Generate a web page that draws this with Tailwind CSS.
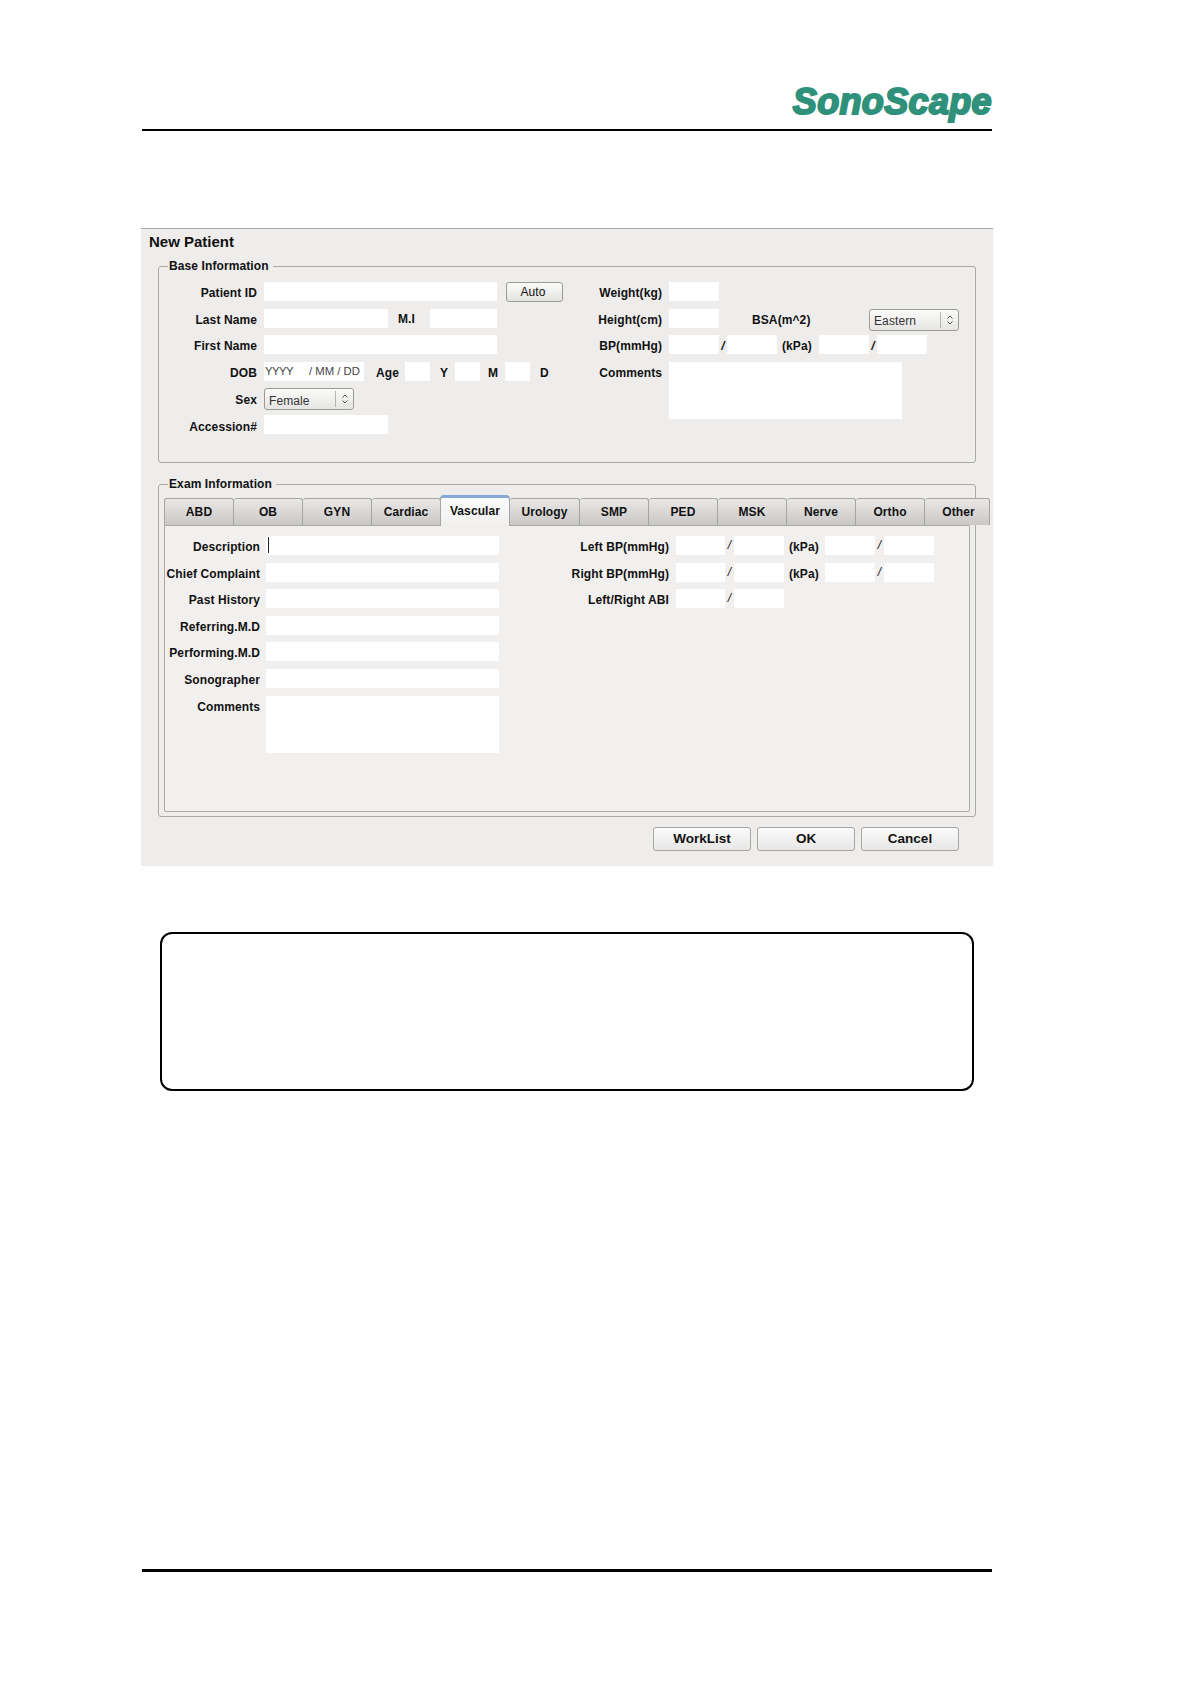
<!DOCTYPE html>
<html lang="en">
<head>
    <meta charset="UTF-8">
    <title>New Patient</title>
    <script src="https://cdn.jsdelivr.net/npm/@tailwindcss/browser@4"></script>
</head>
<body class="bg-white font-['Liberation_Sans',Arial,sans-serif] text-[12px] tracking-[0.1px] text-[#111]">
<div class="w-[1191px] h-[1684px] flex flex-col">

    <!-- page header -->
    <header class="ml-[142px] w-[850px] h-[131px] flex items-end justify-end border-b-2 border-black shrink-0">
        <span class="text-[36px] leading-[36px] mb-[9px] font-bold italic tracking-[0.35px] text-[#2f917a] [-webkit-text-stroke:2px_#2f917a]">SonoScape</span>
    </header>

    <!-- dialog -->
    <section class="ml-[141px] mt-[97px] w-[852px] h-[638px] shrink-0 bg-[#eeedec] border-t border-[#aaaaa8]">
        <h2 class="ml-[8px] mt-[3px] text-[15px] leading-[20px] font-bold tracking-normal">New Patient</h2>

        <!-- base information -->
        <div class="relative ml-[17px] mt-[14px] w-[818px] h-[197px] border border-[#a9a9a7] rounded-[3px] flex pt-[15px]">
            <span class="absolute left-[9px] top-[-9px] leading-[16px] font-bold bg-[#eeedec] pl-px pr-[4px]">Base Information</span>

            <div class="w-[416px] flex flex-col gap-[7.6px]">
                <div class="flex h-[19px]">
                    <label class="w-[98px] text-right font-bold leading-[22px]">Patient ID</label>
                    <div class="ml-[7px] w-[233px] bg-white"></div>
                    <button class="ml-[9px] w-[57px] h-[20px] pr-[3px] border border-[#9b9b99] rounded-[3px] bg-gradient-to-b from-[#fbfbfa] to-[#e4e3e2] leading-[16px]">Auto</button>
                </div>
                <div class="flex h-[19px]">
                    <label class="w-[98px] text-right font-bold leading-[23px]">Last Name</label>
                    <div class="ml-[7px] w-[124px] bg-white"></div>
                    <label class="ml-[10px] w-[32px] font-bold leading-[20px]">M.I</label>
                    <div class="w-[67px] bg-white"></div>
                </div>
                <div class="flex h-[19px]">
                    <label class="w-[98px] text-right font-bold leading-[23px]">First Name</label>
                    <div class="ml-[7px] w-[233px] bg-white"></div>
                </div>
                <div class="flex h-[19px]">
                    <label class="w-[98px] text-right font-bold leading-[23px]">DOB</label>
                    <div class="ml-[7px] w-[100px] bg-white flex text-[#444] text-[11.3px] leading-[18px] pl-[1px]">
                        <span class="w-[44px] tracking-[-0.5px]">YYYY</span>
                        <span class="whitespace-nowrap tracking-normal">/ MM / DD</span>
                    </div>
                    <label class="ml-[12px] w-[29px] font-bold leading-[23px]">Age</label>
                    <div class="w-[25px] bg-white"></div>
                    <label class="ml-[10px] w-[15px] font-bold leading-[23px]">Y</label>
                    <div class="w-[25px] bg-white"></div>
                    <label class="ml-[8px] w-[17px] font-bold leading-[23px]">M</label>
                    <div class="w-[25px] bg-white"></div>
                    <label class="ml-[10px] font-bold leading-[23px]">D</label>
                </div>
                <div class="flex h-[19px]">
                    <label class="w-[98px] text-right font-bold leading-[25px]">Sex</label>
                    <div class="ml-[7px] w-[90px] h-[22px] flex border border-[#9b9b99] rounded-[3px] bg-gradient-to-b from-[#fbfbfa] to-[#e6e5e4]">
                        <span class="w-[71px] pl-[4px] leading-[24px] text-[#333]">Female</span>
                        <span class="w-[18px] my-[2px] border-l border-[#b5b5b3] flex items-center justify-center">
                            <svg width="8" height="12" viewBox="0 0 8 12" fill="none" stroke="#555" stroke-width="1"><path d="M1.500 4.500 4 2l2.500 2.500M1.500 7.500 4 10l2.500-2.500"/></svg>
                        </span>
                    </div>
                </div>
                <div class="flex h-[19px]">
                    <label class="w-[98px] text-right font-bold leading-[24px]">Accession#</label>
                    <div class="ml-[7px] w-[124px] bg-white"></div>
                </div>
            </div>

            <div class="flex-1 flex flex-col gap-[7.6px]">
                <div class="flex h-[19px]">
                    <label class="w-[87px] text-right font-bold leading-[22px]">Weight(kg)</label>
                    <div class="ml-[7px] w-[50px] bg-white"></div>
                </div>
                <div class="flex h-[19px]">
                    <label class="w-[87px] text-right font-bold leading-[22px]">Height(cm)</label>
                    <div class="ml-[7px] w-[50px] bg-white"></div>
                    <label class="ml-[33px] w-[117px] font-bold leading-[22px]">BSA(m^2)</label>
                    <div class="w-[90px] h-[22px] flex border border-[#9b9b99] rounded-[3px] bg-gradient-to-b from-[#fbfbfa] to-[#e6e5e4]">
                        <span class="w-[71px] pl-[4px] leading-[22px] text-[#333]">Eastern</span>
                        <span class="w-[18px] my-[2px] border-l border-[#b5b5b3] flex items-center justify-center">
                            <svg width="8" height="12" viewBox="0 0 8 12" fill="none" stroke="#555" stroke-width="1"><path d="M1.500 4.500 4 2l2.500 2.500M1.500 7.500 4 10l2.500-2.500"/></svg>
                        </span>
                    </div>
                </div>
                <div class="flex h-[19px]">
                    <label class="w-[87px] text-right font-bold leading-[22px]">BP(mmHg)</label>
                    <div class="ml-[7px] w-[50px] bg-white"></div>
                    <span class="w-[8px] text-center font-bold italic leading-[22px]">/</span>
                    <div class="w-[50px] bg-white"></div>
                    <label class="ml-[5px] w-[37px] font-bold leading-[22px]">(kPa)</label>
                    <div class="w-[50px] bg-white"></div>
                    <span class="w-[8px] text-center font-bold italic leading-[22px]">/</span>
                    <div class="w-[50px] bg-white"></div>
                </div>
                <div class="flex">
                    <label class="w-[87px] text-right font-bold leading-[22px]">Comments</label>
                    <div class="ml-[7px] w-[233px] h-[57px] bg-white"></div>
                </div>
            </div>
        </div>

        <!-- exam information -->
        <div class="relative ml-[17px] mt-[21px] w-[818px] h-[333px] border border-[#a9a9a7] rounded-[3px] pt-[10px]">
            <span class="absolute left-[9px] top-[-9px] leading-[16px] font-bold bg-[#eeedec] pl-px pr-[4px]">Exam Information</span>

            <div class="flex ml-[5px] h-[30px] items-end relative z-10">
                <div class="w-[70px] shrink-0 h-[27px] border border-b-0 border-[#a5a5a3] rounded-t-[3px] bg-gradient-to-b from-[#e9e8e7] to-[#c9c8c7] text-center font-bold leading-[26px]">ABD</div>
                <div class="w-[69px] shrink-0 h-[27px] border border-l-0 border-b-0 border-[#a5a5a3] rounded-t-[3px] bg-gradient-to-b from-[#e9e8e7] to-[#c9c8c7] text-center font-bold leading-[26px]">OB</div>
                <div class="w-[69px] shrink-0 h-[27px] border border-l-0 border-b-0 border-[#a5a5a3] rounded-t-[3px] bg-gradient-to-b from-[#e9e8e7] to-[#c9c8c7] text-center font-bold leading-[26px]">GYN</div>
                <div class="w-[69px] shrink-0 h-[27px] border border-l-0 border-b-0 border-[#a5a5a3] rounded-t-[3px] bg-gradient-to-b from-[#e9e8e7] to-[#c9c8c7] text-center font-bold leading-[26px]">Cardiac</div>
                <div class="w-[70px] ml-[-1px] shrink-0 h-[31px] mb-[-1px] border border-b-0 border-[#a5a5a3] border-t-[3px] border-t-[#86a8d2] rounded-t-[4px] bg-gradient-to-b from-[#fbfbfb] to-[#f1f0ef] text-center font-bold leading-[26px]">Vascular</div>
                <div class="w-[70px] shrink-0 h-[27px] border border-l-0 border-b-0 border-[#a5a5a3] rounded-t-[3px] bg-gradient-to-b from-[#e9e8e7] to-[#c9c8c7] text-center font-bold leading-[26px]">Urology</div>
                <div class="w-[69px] shrink-0 h-[27px] border border-l-0 border-b-0 border-[#a5a5a3] rounded-t-[3px] bg-gradient-to-b from-[#e9e8e7] to-[#c9c8c7] text-center font-bold leading-[26px]">SMP</div>
                <div class="w-[69px] shrink-0 h-[27px] border border-l-0 border-b-0 border-[#a5a5a3] rounded-t-[3px] bg-gradient-to-b from-[#e9e8e7] to-[#c9c8c7] text-center font-bold leading-[26px]">PED</div>
                <div class="w-[69px] shrink-0 h-[27px] border border-l-0 border-b-0 border-[#a5a5a3] rounded-t-[3px] bg-gradient-to-b from-[#e9e8e7] to-[#c9c8c7] text-center font-bold leading-[26px]">MSK</div>
                <div class="w-[69px] shrink-0 h-[27px] border border-l-0 border-b-0 border-[#a5a5a3] rounded-t-[3px] bg-gradient-to-b from-[#e9e8e7] to-[#c9c8c7] text-center font-bold leading-[26px]">Nerve</div>
                <div class="w-[69px] shrink-0 h-[27px] border border-l-0 border-b-0 border-[#a5a5a3] rounded-t-[3px] bg-gradient-to-b from-[#e9e8e7] to-[#c9c8c7] text-center font-bold leading-[26px]">Ortho</div>
                <div class="w-[65px] shrink-0 h-[27px] pl-[3px] border border-l-0 border-b-0 border-[#a5a5a3] rounded-t-[3px] bg-gradient-to-b from-[#e9e8e7] to-[#c9c8c7] text-center font-bold leading-[26px]">Other</div>
            </div>

            <div class="ml-[5px] w-[806px] h-[287px] border border-[#a9a9a7] rounded-b-[2px] bg-[#f1f0ef] flex pt-[10px]">
                <div class="w-[335px] flex flex-col gap-[7.6px]">
                    <div class="flex h-[19px]">
                        <label class="w-[95px] text-right font-bold leading-[22px] whitespace-nowrap">Description</label>
                        <div class="ml-[6px] w-[233px] bg-white pl-[2px] pt-[1px]"><div class="w-px h-[16px] bg-[#222]"></div></div>
                    </div>
                    <div class="flex h-[19px]">
                        <label class="w-[95px] text-right font-bold leading-[22px] whitespace-nowrap">Chief Complaint</label>
                        <div class="ml-[6px] w-[233px] bg-white"></div>
                    </div>
                    <div class="flex h-[19px]">
                        <label class="w-[95px] text-right font-bold leading-[23px] whitespace-nowrap">Past History</label>
                        <div class="ml-[6px] w-[233px] bg-white"></div>
                    </div>
                    <div class="flex h-[19px]">
                        <label class="w-[95px] text-right font-bold leading-[22px] whitespace-nowrap">Referring.M.D</label>
                        <div class="ml-[6px] w-[233px] bg-white"></div>
                    </div>
                    <div class="flex h-[19px]">
                        <label class="w-[95px] text-right font-bold leading-[23px] whitespace-nowrap">Performing.M.D</label>
                        <div class="ml-[6px] w-[233px] bg-white"></div>
                    </div>
                    <div class="flex h-[19px]">
                        <label class="w-[95px] text-right font-bold leading-[22px] whitespace-nowrap">Sonographer</label>
                        <div class="ml-[6px] w-[233px] bg-white"></div>
                    </div>
                    <div class="flex">
                        <label class="w-[95px] text-right font-bold leading-[22px] whitespace-nowrap">Comments</label>
                        <div class="ml-[6px] w-[233px] h-[57px] bg-white"></div>
                    </div>
                </div>

                <div class="flex-1 flex flex-col gap-[7.6px]">
                    <div class="flex h-[19px]">
                        <label class="w-[169px] text-right font-bold leading-[22px]">Left BP(mmHg)</label>
                        <div class="ml-[7px] w-[49px] bg-white"></div>
                        <span class="w-[9px] text-center italic leading-[18px]">/</span>
                        <div class="w-[50px] bg-white"></div>
                        <label class="ml-[5px] w-[36px] font-bold leading-[22px]">(kPa)</label>
                        <div class="w-[50px] bg-white"></div>
                        <span class="w-[9px] text-center italic leading-[18px]">/</span>
                        <div class="w-[50px] bg-white"></div>
                    </div>
                    <div class="flex h-[19px]">
                        <label class="w-[169px] text-right font-bold leading-[22px]">Right BP(mmHg)</label>
                        <div class="ml-[7px] w-[49px] bg-white"></div>
                        <span class="w-[9px] text-center italic leading-[18px]">/</span>
                        <div class="w-[50px] bg-white"></div>
                        <label class="ml-[5px] w-[36px] font-bold leading-[22px]">(kPa)</label>
                        <div class="w-[50px] bg-white"></div>
                        <span class="w-[9px] text-center italic leading-[18px]">/</span>
                        <div class="w-[50px] bg-white"></div>
                    </div>
                    <div class="flex h-[19px]">
                        <label class="w-[169px] text-right font-bold leading-[23px]">Left/Right ABI</label>
                        <div class="ml-[7px] w-[49px] bg-white"></div>
                        <span class="w-[9px] text-center italic leading-[18px]">/</span>
                        <div class="w-[50px] bg-white"></div>
                    </div>
                </div>
            </div>
        </div>

        <!-- dialog buttons -->
        <div class="flex justify-end gap-[6px] mr-[34px] mt-[10px] text-[13.5px] font-bold tracking-normal">
            <button class="w-[98px] h-[24px] border border-[#a5a5a3] rounded-[3px] bg-gradient-to-b from-[#fbfbfb] to-[#e8e7e6]">WorkList</button>
            <button class="w-[98px] h-[24px] border border-[#a5a5a3] rounded-[3px] bg-gradient-to-b from-[#fbfbfb] to-[#e8e7e6]">OK</button>
            <button class="w-[98px] h-[24px] border border-[#a5a5a3] rounded-[3px] bg-gradient-to-b from-[#fbfbfb] to-[#e8e7e6]">Cancel</button>
        </div>
    </section>

    <!-- empty note box -->
    <div class="ml-[160px] mt-[66px] w-[814px] h-[159px] shrink-0 border-2 border-black rounded-[12px]"></div>

    <!-- page footer -->
    <div class="ml-[142px] mt-[478px] w-[850px] h-[3px] bg-black shrink-0"></div>
</div>
</body>
</html>
